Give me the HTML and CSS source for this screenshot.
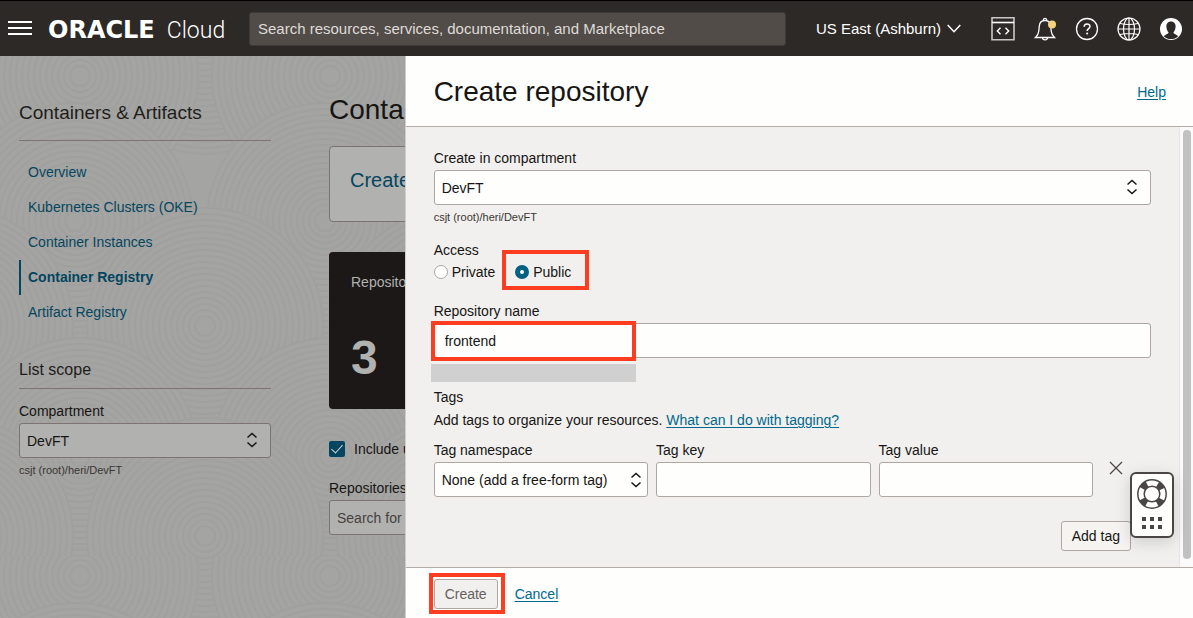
FILE: index.html
```html
<!DOCTYPE html>
<html lang="en">
<head>
<meta charset="utf-8">
<title>Create repository - Oracle Cloud</title>
<link rel="stylesheet" href="styles.css">
</head>
<body>
<header class="topbar">
  <button class="icon-btn menu" aria-label="Menu">
    <svg width="24" height="16" viewBox="0 0 24 16" stroke="#fff" stroke-width="2"><path d="M0 1h24M0 7h24M0 13h24"/></svg>
  </button>
  <a class="logo" href="#"><span class="logo-brand">ORACLE</span><span class="logo-product">Cloud</span></a>
  <input class="global-search" type="text" aria-label="Search" placeholder="Search resources, services, documentation, and Marketplace">
  <button class="region">US East (Ashburn)
    <svg width="14" height="9" viewBox="0 0 14 9" fill="none" stroke="#fff" stroke-width="1.5"><path d="M.7 1 7 7.7 13.300 1"/></svg>
  </button>
  <nav class="tools" aria-label="Tools">
    <button class="icon-btn" aria-label="Developer tools">
      <svg width="24" height="24" viewBox="0 0 24 24" fill="none" stroke="#c9c8c6" stroke-width="1.6"><path d="M1 .8h22v22H1z"/><path d="M1 5.500h22" stroke="#fff"/><path d="M9.500 10.800 6.300 14l3.200 3.200M14.500 10.800l3.200 3.200-3.200 3.200" stroke="#fff" stroke-width="1.400"/></svg>
    </button>
    <button class="icon-btn" aria-label="Announcements">
      <svg width="24" height="24" viewBox="0 0 24 24" fill="none" stroke="#fff" stroke-width="1.300"><path d="M2.500 20.500h19c-2.200-2-3-3.500-3.300-6.500l-.5-5c-.3-3.500-2.500-5.500-5.700-5.500S6.600 5.500 6.300 9l-.5 5c-.3 3-1.100 4.500-3.300 6.500z"/><path d="M10.400 3.500c-.4-2.800 3.600-2.800 3.200 0M9.500 20.700c.2 2.900 4.800 2.900 5 0"/><circle cx="19" cy="7.500" r="4" fill="#f4d27f" stroke="none"/></svg>
    </button>
    <button class="icon-btn" aria-label="Help menu">
      <svg width="24" height="24" viewBox="0 0 24 24" fill="none" stroke="#fff" stroke-width="1.300"><circle cx="12" cy="12" r="10.500"/><path d="M9.200 9.800c0-3.600 5.800-3.500 5.800-.3 0 2.200-2.900 2.200-2.900 4.500" stroke-width="1.500"/><circle cx="12.100" cy="16.500" r="1" fill="#fff" stroke="none"/></svg>
    </button>
    <button class="icon-btn" aria-label="Language">
      <svg width="24" height="24" viewBox="0 0 24 24" fill="none" stroke="#fff" stroke-width="1.200"><circle cx="12" cy="12" r="11"/><ellipse cx="12" cy="12" rx="5.500" ry="11"/><path d="M12 1v22M1 12h22M3 6.500q9 2 18 0M3 17.500q9-2 18 0"/></svg>
    </button>
    <button class="icon-btn" aria-label="Profile">
      <svg width="24" height="24" viewBox="0 0 24 24"><circle cx="12" cy="12" r="11" fill="#fff"/><path d="M12 4.500c3 0 4.700 2.200 4.600 5.200-.1 2.600-1.200 4.600-2.200 5.700.3 1.600 3.600 1.900 4.800 3.800C17.300 21.200 14.700 22 12 22s-5.300-.8-7.200-2.800c1.200-1.900 4.500-2.200 4.800-3.800-1-1.100-2.100-3.100-2.200-5.700C7.300 6.700 9 4.500 12 4.500z" fill="#2d2926"/></svg>
    </button>
  </nav>
</header>

<div class="page">
  <svg class="texture" width="100%" height="100%" aria-hidden="true">
    <defs>
      <g id="rings" fill="none" stroke="#a0a19f" stroke-width="2">
        <circle r="118" fill="#a4a4a2"/><circle r="112"/><circle r="106"/><circle r="100"/><circle r="94"/><circle r="88"/><circle r="82"/><circle r="76"/><circle r="70"/><circle r="64"/><circle r="58"/><circle r="52"/><circle r="46"/><circle r="40"/><circle r="34"/><circle r="28"/><circle r="22"/><circle r="16"/><circle r="10"/>
      </g>
      <pattern id="scallops" width="250" height="500" patternUnits="userSpaceOnUse">
        <use href="#rings" x="205" y="-20"/><use href="#rings" x="-45" y="-20"/>
        <use href="#rings" x="330" y="20"/><use href="#rings" x="80" y="20"/>
        <use href="#rings" x="75" y="165"/><use href="#rings" x="325" y="165"/>
        <use href="#rings" x="205" y="270"/><use href="#rings" x="-45" y="270"/>
        <use href="#rings" x="80" y="400"/><use href="#rings" x="330" y="400"/>
        <use href="#rings" x="205" y="480"/><use href="#rings" x="-45" y="480"/>
      </pattern>
    </defs>
    <rect width="100%" height="100%" fill="url(#scallops)"/>
  </svg>

  <aside class="sidebar">
    <h2 class="side-title">Containers &amp; Artifacts</h2>
    <nav class="side-nav">
      <a href="#">Overview</a>
      <a href="#">Kubernetes Clusters (OKE)</a>
      <a href="#">Container Instances</a>
      <a href="#" class="active" aria-current="page">Container Registry</a>
      <a href="#">Artifact Registry</a>
    </nav>
    <h3 class="scope-title">List scope</h3>
    <label class="label" for="scope">Compartment</label>
    <div class="select">
      <select id="scope"><option>DevFT</option></select>
      <svg class="updown" width="12" height="16" viewBox="0 0 12 16"><path d="M1.500 5.500 6 1.500l4.500 4M1.500 10.500l4.500 4 4.500-4"/></svg>
    </div>
    <p class="hint">csjt (root)/heri/DevFT</p>
  </aside>

  <main class="content">
    <h1 class="page-title">Conta</h1>
    <a class="create-card" href="#">Create</a>
    <section class="stat">
      <span>Repositories</span>
      <strong>3</strong>
    </section>
    <label class="include">
      <input type="checkbox" checked>
      <span>Include u</span>
    </label>
    <label class="label" for="repo-search">Repositories</label>
    <input class="field" id="repo-search" type="text" placeholder="Search for">
  </main>

  <section class="drawer" role="dialog" aria-labelledby="drawer-title">
    <header class="drawer-head">
      <h2 id="drawer-title">Create repository</h2>
      <a class="link" href="#">Help</a>
    </header>
    <div class="drawer-body">
      <form class="form">
        <label class="label" for="compartment">Create in compartment</label>
        <div class="select">
          <select id="compartment"><option>DevFT</option></select>
          <svg class="updown" width="12" height="16" viewBox="0 0 12 16"><path d="M1.500 5.500 6 1.500l4.500 4M1.500 10.500l4.500 4 4.500-4"/></svg>
        </div>
        <p class="hint">csjt (root)/heri/DevFT</p>

        <fieldset class="access">
          <legend>Access</legend>
          <div class="options">
            <label class="radio"><input type="radio" name="access"><span>Private</span></label>
            <label class="radio marked"><input type="radio" name="access" checked><span>Public</span></label>
          </div>
        </fieldset>

        <label class="label" for="name">Repository name</label>
        <div class="name-box">
          <input class="field" id="name" type="text" value="frontend">
        </div>
        <div class="redacted"></div>

        <section class="tags">
          <h3>Tags</h3>
          <p>Add tags to organize your resources. <a class="link" href="#">What can I do with tagging?</a></p>
          <div class="tag-row">
            <div class="tag-col">
              <label class="label" for="ns">Tag namespace</label>
              <div class="select">
                <select id="ns"><option>None (add a free-form tag)</option></select>
                <svg class="updown" width="12" height="16" viewBox="0 0 12 16"><path d="M1.500 5.500 6 1.500l4.500 4M1.500 10.500l4.500 4 4.500-4"/></svg>
              </div>
            </div>
            <div class="tag-col">
              <label class="label" for="key">Tag key</label>
              <input class="field" id="key" type="text">
            </div>
            <div class="tag-col">
              <label class="label" for="value">Tag value</label>
              <input class="field" id="value" type="text">
            </div>
            <button class="remove" type="button" aria-label="Remove tag">
              <svg width="14" height="14" viewBox="0 0 14 14" stroke="#4a4542" stroke-width="1.200"><path d="M1 1l12 12M13 1 1 13"/></svg>
            </button>
          </div>
          <button class="button add" type="button">Add tag</button>
        </section>
      </form>
      <div class="scrollbar"><div class="thumb"></div></div>
      <button class="support" type="button" aria-label="Support">
        <svg width="32" height="54" viewBox="0 0 32 54" fill="none" stroke="#4a4643">
          <circle cx="16" cy="16" r="11" stroke-width="6.500" stroke-dasharray="6.400 10.880" stroke-dashoffset="-5.440"/>
          <circle cx="16" cy="16" r="14.200" stroke-width="1.500"/>
          <circle cx="16" cy="16" r="7.800" stroke-width="1.500"/>
          <path d="M6 41h4m4 0h4m4 0h4M6 49h4m4 0h4m4 0h4" stroke-width="4"/>
        </svg>
      </button>
    </div>
    <footer class="drawer-foot">
      <div class="create-wrap"><button class="button create" type="button" disabled>Create</button></div>
      <a class="link" href="#">Cancel</a>
    </footer>
  </section>
</div>
</body>
</html>
```

FILE: styles.css
```css
*, *::before, *::after { box-sizing: border-box; }

body {
  margin: 0;
  height: 100vh;
  display: flex;
  flex-direction: column;
  overflow: hidden;
  font: 14px/20px "Liberation Sans", Arial, sans-serif;
  color: #161513;
}

h1, h2, h3, p { margin: 0; font-weight: 400; }
button, input, select { font: inherit; color: inherit; }
button { cursor: pointer; }

/* Top bar */
.topbar {
  flex: none;
  height: 56px;
  display: flex;
  align-items: center;
  padding: 0 10px 0 8px;
  border-top: 1px solid #000;
  background: #2d2926;
  color: #fff;
}
.icon-btn {
  display: flex;
  padding: 0;
  border: 0;
  background: none;
}
.logo {
  width: 201px;
  padding: 3px 0 0 16px;
  margin-right: 16px;
  display: flex;
  align-items: baseline;
  gap: 12px;
  color: #fff;
  text-decoration: none;
  line-height: 28px;
}
.logo-brand { font-family: "DejaVu Sans", sans-serif; font-weight: 700; font-size: 24px; }
.logo-product { font-family: Roboto, sans-serif; font-weight: 300; font-size: 23px; }
.global-search {
  flex: 0 1 537px;
  min-width: 0;
  height: 34px;
  padding: 0 8px;
  border: 1px solid #3f3a37;
  border-radius: 3px;
  background: #514c47;
  font-size: 15px;
}
.global-search::placeholder { color: #dedbd8; opacity: 1; }
.region {
  display: flex;
  align-items: center;
  gap: 6px;
  margin-left: auto;
  padding: 0;
  border: 0;
  background: none;
  font-size: 15px;
  white-space: nowrap;
}
.tools { display: flex; gap: 18px; margin-left: 30px; }

/* Page behind the drawer */
.page {
  position: relative;
  flex: 1;
  min-height: 0;
  display: flex;
  gap: 58px;
  padding-left: 19px;
  overflow: hidden;
  background: #a4a4a2;
}
.texture { position: absolute; inset: 0; }
.sidebar { position: relative; flex: none; width: 252px; }
.side-title {
  padding: 44px 0 15px;
  border-bottom: 1px solid #7b7470;
  font-size: 19px;
  line-height: 25px;
  color: #1f1d1b;
}
.side-nav { margin: 14px 0 30px; }
.side-nav a {
  display: block;
  padding: 0 7px;
  border-left: 2px solid transparent;
  line-height: 35px;
  color: #04465f;
  text-decoration: none;
}
.side-nav .active { border-color: #04465f; font-weight: 700; }
.scope-title {
  padding-bottom: 8px;
  margin-bottom: 12px;
  border-bottom: 1px solid #7b7470;
  font-size: 16px;
  color: #1f1d1b;
}
.label { display: block; margin-bottom: 2px; }
.hint { margin-top: 2px; font-size: 11px; color: #3a3633; }

.select { position: relative; }
.select select, .field {
  display: block;
  width: 100%;
  height: 35px;
  padding: 0 7px;
  border: 1px solid #aea6a0;
  border-radius: 3px;
  background: #fefefc;
}
.select select { appearance: none; }
.updown {
  position: absolute;
  right: 13px;
  top: 9px;
  fill: none;
  stroke: #161513;
  stroke-width: 1.5;
  pointer-events: none;
}
.sidebar select, .content .field { border-color: #7b7470; background: #b1b1af; }
.content .field::placeholder { color: #45413e; opacity: 1; }

.content { position: relative; flex: 1; min-width: 0; padding-top: 36px; }
.page-title { margin-bottom: 18px; font-size: 28px; line-height: 36px; }
.create-card {
  display: block;
  height: 76px;
  margin-bottom: 30px;
  padding: 23px 20px;
  border: 1px solid #7b7470;
  border-radius: 4px;
  background: #b1b1af;
  font-size: 20px;
  color: #04465f;
  text-decoration: none;
}
.stat {
  display: flex;
  flex-direction: column;
  gap: 40px;
  height: 157px;
  margin-bottom: 30px;
  padding: 20px 22px;
  border-radius: 4px;
  background: #1b1817;
  color: #b1b1af;
}
.stat strong { font-size: 48px; line-height: 52px; }
.include { display: flex; align-items: center; gap: 9px; margin-bottom: 19px; }
.include input {
  appearance: none;
  width: 16px;
  height: 16px;
  margin: 0;
  border-radius: 2px;
  background: #04465f;
}
.include input::after {
  content: "";
  display: block;
  width: 6px;
  height: 11px;
  margin: 1px 0 0 5px;
  border: solid #d5d5d3;
  border-width: 0 1px 1px 0;
  transform: rotate(42deg);
}

/* Drawer */
.drawer {
  position: absolute;
  inset: 0 0 0 auto;
  width: calc(66% + 1px);
  display: flex;
  flex-direction: column;
  border-left: 1px solid #d0cecb;
  background: #fefefc;
}
.drawer-head {
  display: flex;
  align-items: center;
  justify-content: space-between;
  height: 71px;
  padding: 2px 27px 0 28px;
  border-bottom: 1px solid #b3aba6;
}
.drawer-head h2 { font-size: 28px; line-height: 36px; }
.link { color: #00688c; text-underline-offset: 2px; }
.drawer-body {
  position: relative;
  flex: 1;
  min-height: 0;
  display: flex;
  background: #f1f0ee;
}
.form { flex: 1; min-width: 0; padding: 21px 28px 0; }
.access { margin: 13px 0 19px; padding: 0; border: 0; }
.access legend { padding: 0; }
.options { display: flex; gap: 20px; padding-top: 2px; }
.radio { position: relative; display: flex; align-items: center; gap: 4px; }
.radio input {
  appearance: none;
  width: 14px;
  height: 14px;
  margin: 0;
  border: 1px solid #aea6a0;
  border-radius: 50%;
  background: #fefefc;
}
.radio input:checked { border: 5px solid #00607f; }

/* Highlight frames */
.marked::after, .name-box::after, .create-wrap::after {
  content: "";
  position: absolute;
  border: 4px solid #fc3d20;
  pointer-events: none;
}
.marked::after { inset: -12px -18px -8px -13px; }
.name-box { position: relative; }
.name-box .field { padding-left: 10px; }
.name-box::after { left: -3px; top: -2px; width: 205px; height: 40px; }
.redacted { width: 205px; height: 18px; margin: 6px 0 5px -3px; background: #d0d0d0; }

.tags { padding-right: 20px; }
.tags h3 { font-size: 14px; }
.tags p { margin: 3px 0 10px; }
.tag-row { display: flex; gap: 8px; margin-bottom: 24px; }
.tag-col { flex: 1; min-width: 0; }
.tag-col .updown { right: 6px; top: 10px; }
.remove {
  width: 30px;
  height: 30px;
  margin-top: 13px;
  padding: 0;
  border: 0;
  background: none;
  display: grid;
  place-items: center;
}
.button {
  display: block;
  height: 30px;
  padding: 0 10px;
  border: 1px solid #aea6a0;
  border-radius: 3px;
  background: #f5f4f1;
}
.add { margin-left: auto; }

.scrollbar {
  flex: none;
  width: 14px;
  padding: 3px 2px 8px 3px;
  border-left: 1px solid #e5e5e5;
  background: #fafafa;
}
.thumb { height: 100%; border-radius: 4px; background: #c1c1c1; }

.support {
  position: absolute;
  right: 19px;
  bottom: 29px;
  width: 44px;
  height: 66px;
  padding: 4px;
  border: 2px solid #4a4643;
  border-radius: 6px;
  background: #fefefc;
  box-shadow: 0 4px 16px rgba(0, 0, 0, 0.15);
}
.support svg { display: block; }

.drawer-foot {
  flex: none;
  display: flex;
  align-items: center;
  gap: 17px;
  height: 51px;
  padding: 1px 28px 0;
  border-top: 1px solid #b3aba6;
}
.create-wrap { position: relative; }
.create-wrap::after { inset: -6px -7px -5px -5px; }
.create { background: #f1f0ee; color: #66615d; }
```
